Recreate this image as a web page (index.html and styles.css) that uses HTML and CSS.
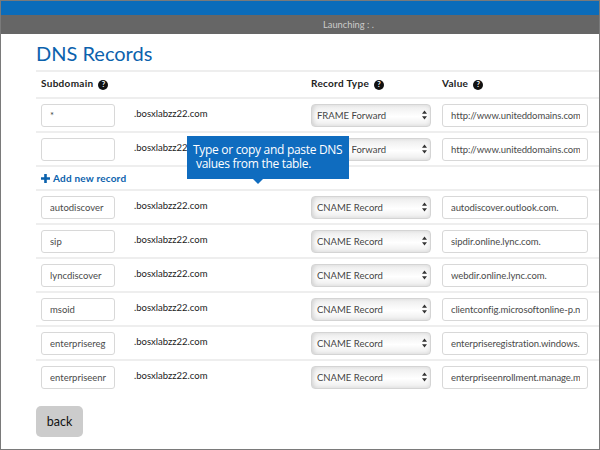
FILE: index.html
```html
<!DOCTYPE html>
<html lang="en">
<head>
  <meta charset="UTF-8"/>
  <title>DNS Records</title>
  <link rel="stylesheet" href="styles.css">
</head>
<body>
  <div class="frame">
    <div class="topbar"></div>
    <div class="statusbar">Launching : .</div>
    <main class="content">
      <h1>DNS Records</h1>
      <div class="table">
        <div class="row head">
          <div class="c-sub">Subdomain <span class="help">?</span></div>
          <div class="c-dom"></div>
          <div class="c-type">Record Type <span class="help">?</span></div>
          <div class="c-val">Value <span class="help">?</span></div>
        </div>

        <div class="row">
          <div class="c-sub"><input class="field" value="*"></div>
          <div class="c-dom">.bosxlabzz22.com</div>
          <div class="c-type"><div class="select"><span>FRAME Forward</span><svg width="5" height="10" viewBox="0 0 6 11"><path d="M3 0 6 4H0zM3 11 0 7h6z"/></svg></div></div>
          <div class="c-val"><input class="field" value="http://www.uniteddomains.com."></div>
        </div>
        <div class="row">
          <div class="c-sub"><input class="field" value=""></div>
          <div class="c-dom">.bosxlabzz22.com</div>
          <div class="c-type"><div class="select"><span>FRAME Forward</span><svg width="5" height="10" viewBox="0 0 6 11"><path d="M3 0 6 4H0zM3 11 0 7h6z"/></svg></div></div>
          <div class="c-val"><input class="field" value="http://www.uniteddomains.com."></div>
        </div>
        <div class="row add">
          <a class="add-link"><svg width="9" height="9" viewBox="0 0 9 9"><path d="M3.2 0h2.6v3.2H9v2.6H5.8V9H3.2V5.8H0V3.2h3.2z"/></svg>Add new record</a>
        </div>

        <div class="row">
          <div class="c-sub"><input class="field" value="autodiscover"></div>
          <div class="c-dom">.bosxlabzz22.com</div>
          <div class="c-type"><div class="select"><span>CNAME Record</span><svg width="5" height="10" viewBox="0 0 6 11"><path d="M3 0 6 4H0zM3 11 0 7h6z"/></svg></div></div>
          <div class="c-val"><input class="field" value="autodiscover.outlook.com."></div>
        </div>
        <div class="row">
          <div class="c-sub"><input class="field" value="sip"></div>
          <div class="c-dom">.bosxlabzz22.com</div>
          <div class="c-type"><div class="select"><span>CNAME Record</span><svg width="5" height="10" viewBox="0 0 6 11"><path d="M3 0 6 4H0zM3 11 0 7h6z"/></svg></div></div>
          <div class="c-val"><input class="field" value="sipdir.online.lync.com."></div>
        </div>
        <div class="row">
          <div class="c-sub"><input class="field" value="lyncdiscover"></div>
          <div class="c-dom">.bosxlabzz22.com</div>
          <div class="c-type"><div class="select"><span>CNAME Record</span><svg width="5" height="10" viewBox="0 0 6 11"><path d="M3 0 6 4H0zM3 11 0 7h6z"/></svg></div></div>
          <div class="c-val"><input class="field" value="webdir.online.lync.com."></div>
        </div>
        <div class="row">
          <div class="c-sub"><input class="field" value="msoid"></div>
          <div class="c-dom">.bosxlabzz22.com</div>
          <div class="c-type"><div class="select"><span>CNAME Record</span><svg width="5" height="10" viewBox="0 0 6 11"><path d="M3 0 6 4H0zM3 11 0 7h6z"/></svg></div></div>
          <div class="c-val"><input class="field" value="clientconfig.microsoftonline-p.net."></div>
        </div>
        <div class="row">
          <div class="c-sub"><input class="field" value="enterprisereg"></div>
          <div class="c-dom">.bosxlabzz22.com</div>
          <div class="c-type"><div class="select"><span>CNAME Record</span><svg width="5" height="10" viewBox="0 0 6 11"><path d="M3 0 6 4H0zM3 11 0 7h6z"/></svg></div></div>
          <div class="c-val"><input class="field" value="enterpriseregistration.windows.net."></div>
        </div>
        <div class="row last">
          <div class="c-sub"><input class="field" value="enterpriseenr"></div>
          <div class="c-dom">.bosxlabzz22.com</div>
          <div class="c-type"><div class="select"><span>CNAME Record</span><svg width="5" height="10" viewBox="0 0 6 11"><path d="M3 0 6 4H0zM3 11 0 7h6z"/></svg></div></div>
          <div class="c-val"><input class="field" value="enterpriseenrollment.manage.microsoft.com."></div>
        </div>
      </div>
      <button class="back">back</button>
      <div class="tip">Type or copy and paste DNS<br>values from the table.</div>
    </main>
  </div>
</body>
</html>
```

FILE: styles.css
```css
body { margin:0; background:#fff; font-family:"Lato", sans-serif; color:#333; }
.frame { position:relative; width:600px; height:450px; box-sizing:border-box; border:1px solid #7a7a7a; overflow:hidden; }
.topbar { height:14px; background:#0b6cba; }
.statusbar { height:19px; background:#666; color:#ccc; font-size:9.3px; line-height:19px; padding-left:322px; }
.content { padding-left:35px; }
h1 { margin:0; height:36px; font-size:20px; line-height:38px; font-weight:400; color:#0b62ad; }

.table { border-top:2px solid #eee; }
.row { display:flex; align-items:center; height:32px; border-bottom:2px solid #eee; font-size:9.5px; color:#222; }
.row.head { height:25px; font-weight:700; font-size:10px; letter-spacing:0.3px; color:#222; }
.row.add { height:22px; }
.row.last { border-bottom:none; }
.c-sub { width:98px; box-sizing:border-box; padding-left:5px; flex-shrink:0; }
.c-dom { width:177px; flex-shrink:0; padding-bottom:3px; }
.c-type { width:131px; flex-shrink:0; }
.c-val { width:146px; flex-shrink:0; }
.head .c-sub, .head .c-type, .head .c-val { display:flex; align-items:center; gap:5px; padding-bottom:3px; }

.help { display:inline-block; width:10px; height:10px; border-radius:50%; background:#111; color:#fff; font-size:7.5px; line-height:10px; text-align:center; letter-spacing:0; margin-top:3px; }
.field { display:block; width:100%; height:23px; box-sizing:border-box; border:1px solid #d8d8d8; border-radius:3px; padding:0 7px 0 8px; font-family:inherit; font-size:9.5px; color:#4a4a4a; background:#fff; outline:none; }
.c-val .field { letter-spacing:-0.08px; }
.c-sub .field { width:74px; padding-right:5px; }
.select { display:flex; align-items:center; justify-content:space-between; width:120px; height:23px; box-sizing:border-box; padding:0 3px 0 5px; border:1px solid #d4d4d4; border-radius:4px; background:linear-gradient(#ececec,#fff 55%,#ececec); box-shadow:inset 3px 0 5px -2px #ccc, inset -2px 0 4px -2px #ddd; font-size:9.5px; color:#444; }
.select svg { fill:#333; }

.add-link { display:flex; align-items:center; gap:3px; padding-left:5px; font-weight:700; font-size:10px; letter-spacing:0.2px; color:#0b62ad; }
.add-link svg { fill:#0b62ad; }

.back { display:block; margin-top:13px; width:47px; height:31px; border:none; border-radius:5px; background:#ccc; color:#111; font-family:inherit; font-size:12.5px; padding:0; }

.tip { position:absolute; left:186px; top:135px; width:162px; height:43px; box-sizing:border-box; padding:7px 0 0 9px; background:#0f6cbf; color:#fff; font-family:"Open Sans", sans-serif; font-size:12px; letter-spacing:-0.3px; line-height:14px; text-indent:-3px; white-space:nowrap; }
.tip::after { content:""; position:absolute; left:66px; top:43px; border:5px solid transparent; border-top-color:#0f6cbf; border-bottom:none; }
```
